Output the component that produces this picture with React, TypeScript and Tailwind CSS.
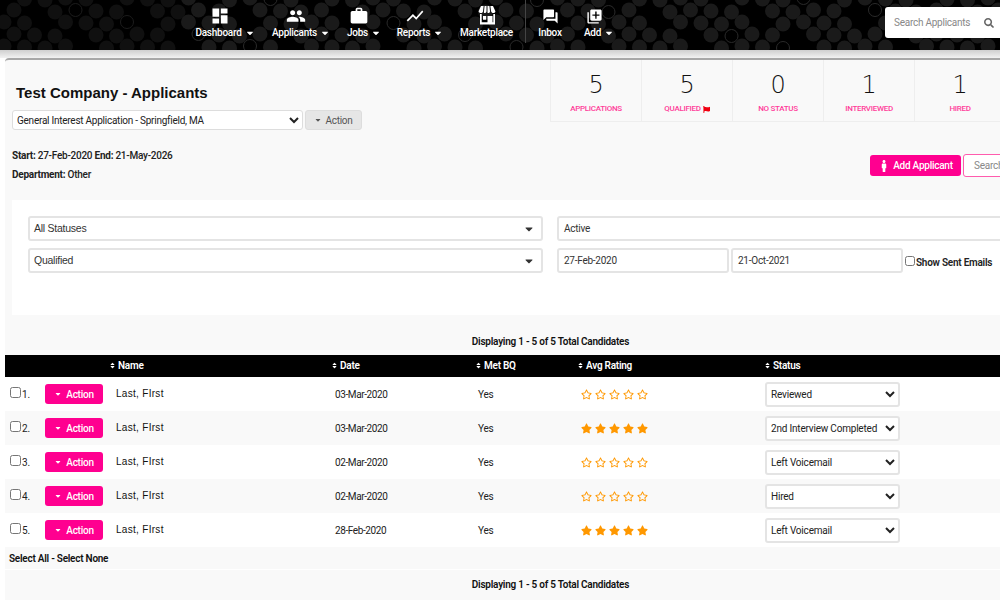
import { FaCaretDown, FaFlag, FaMale, FaRegStar, FaSearch, FaSort, FaStar } from 'react-icons/fa';
import { MdDashboard, MdLibraryAdd, MdPeople, MdQuestionAnswer, MdShowChart, MdWork } from 'react-icons/md';

function StoreIcon({ className }: { className?: string }) {
  return (
    <svg viewBox="0 0 20 20" fill="currentColor" className={className}>
      <path d="M4 0h2.6L6 5.2c0 1-.8 1.8-2 1.8S1.6 6.200 1.600 5.200z" />
      <path d="M7.600 0H9.500v5.200c0 1-.8 1.800-1.800 1.800S6.900 6.200 7 5.200z" />
      <path d="M10.500 0h1.900l.6 5.200c.1 1-.7 1.800-1.700 1.800s-.8-.8-.8-1.800z" />
      <path d="M13.400 0H16l2.400 5.200c0 1-.9 1.800-2.100 1.800s-1.900-.8-2.200-1.800z" />
      <path d="M3 8h1.700v8.300h5.800V10h5V16.300h.8V8H18v10.500H3zM6 10h3.200v3.800H6z" />
    </svg>
  );
}

const NAV = [
  { label: 'Dashboard', icon: MdDashboard, caret: true, w: 'w-[58px]' },
  { label: 'Applicants', icon: MdPeople, caret: true, w: 'w-[56px]' },
  { label: 'Jobs', icon: MdWork, caret: true, w: 'w-[32px]' },
  { label: 'Reports', icon: MdShowChart, caret: true, w: 'w-[42px]' },
  { label: 'Marketplace', icon: StoreIcon, caret: false, w: 'w-[53px]' },
];

const STATS = [
  { value: '5', label: 'APPLICATIONS' },
  { value: '5', label: 'QUALIFIED', flag: true },
  { value: '0', label: 'NO STATUS' },
  { value: '1', label: 'INTERVIEWED' },
  { value: '1', label: 'HIRED' },
];

const ROWS = [
  { n: 1, date: '03-Mar-2020', full: false, status: 'Reviewed' },
  { n: 2, date: '03-Mar-2020', full: true, status: '2nd Interview Completed' },
  { n: 3, date: '02-Mar-2020', full: false, status: 'Left Voicemail' },
  { n: 4, date: '02-Mar-2020', full: false, status: 'Hired' },
  { n: 5, date: '28-Feb-2020', full: true, status: 'Left Voicemail' },
];

const STATUS_OPTIONS = ['Reviewed', '2nd Interview Completed', 'Left Voicemail', 'Hired'];

const COLS = 'grid grid-cols-[40px_71px_219px_143px_103px_185px_1fr] items-center';

function Dots() {
  const items = [];
  for (let y = 0; y < 6; y++) {
    for (let x = 0; x < 52; x++) {
      const cx = x * 20.5 + (y % 2 ? 10 : 0) + 4;
      const cy = y * 12 - 2 + ((x * 7) % 3);
      const ring = (x * 5 + y * 11) % 13 === 0;
      const skip = (x * 3 + y * 7) % 5 === 0;
      if (skip) continue;
      const faint = x < 9;
      items.push(
        ring ? (
          <circle key={`${x}-${y}`} cx={cx} cy={cy} r={6.5} fill="none" stroke={faint ? '#1c1c1c' : '#2a2a2a'} strokeWidth={1} />
        ) : (
          <circle key={`${x}-${y}`} cx={cx} cy={cy} r={7.5} fill={faint ? '#101010' : '#1a1a1a'} />
        ),
      );
    }
  }
  return (
    <svg className="absolute inset-0" width="1000" height="50">
      {items}
    </svg>
  );
}

function Filter({ text, caret, className }: { text: string; caret?: boolean; className: string }) {
  return (
    <div className={`h-[25px] bg-white border-2 border-[#e4e4e4] rounded-[3px] flex items-center justify-between pr-[6px] text-[#333] shrink-0 ${caret ? 'pl-[4px]' : 'pl-[5px]'} ${className}`}>
      <span>{text}</span>
      {caret && <FaCaretDown className="text-[#333] text-[12px]" />}
    </div>
  );
}

function Sort({ label }: { label: string }) {
  return (
    <span className="flex items-center gap-[2px]">
      <FaSort className="text-[7px]" />
      {label}
    </span>
  );
}

export default function App() {
  return (
    <div className="w-[1000px] h-[600px] overflow-hidden bg-white text-[10px] tracking-[-0.25px] text-[#222] font-['Roboto',sans-serif]">
      <header className="relative h-[50px] bg-black overflow-hidden">
        <Dots />
        <div className="relative flex h-full">
          <nav className="flex items-start pl-[196px] gap-[19px] pt-[6px] text-white font-medium">
            {NAV.map((item) => (
              <div key={item.label} className={`flex flex-col items-center ${item.w}`}>
                <item.icon className={`w-[20px] h-[20px] mb-px ${item.caret ? 'mr-[10px]' : ''}`} />
                <span className="flex items-center gap-[3px] whitespace-nowrap leading-[12px]">
                  {item.label}
                  {item.caret && <FaCaretDown className="text-[10px]" />}
                </span>
              </div>
            ))}
            <div className="w-px h-[43px] bg-[#444] -mt-[6px] mx-[-7px]" />
            <div className="flex flex-col items-center w-[24px]">
              <MdQuestionAnswer className="text-[17px] h-[21px]" />
              <span className="leading-[12px]">Inbox</span>
            </div>
            <div className="flex flex-col items-center w-[28px] ml-[4px]">
              <MdLibraryAdd className="text-[17px] h-[21px] mr-[10px]" />
              <span className="flex items-center gap-[3px] leading-[12px]">
                Add
                <FaCaretDown className="text-[10px]" />
              </span>
            </div>
          </nav>
          <div className="absolute left-[885px] top-[7px] w-[115px] h-[31px] bg-white rounded-l-[3px] flex items-center pl-[9px] gap-[14px] text-[#888]">
            <span className="whitespace-nowrap">Search Applicants</span>
            <FaSearch className="text-[10px] text-[#666]" />
          </div>
        </div>
      </header>

      <div className="h-[8px] bg-gradient-to-b from-[#cfcfcf] to-[#f2f2f2]" />
      <div className="ml-[5px] bg-[#f9f9f9] border-t-2 border-[#a8a8a8] rounded-tl-[4px] h-[542px]">
        <section className="flex h-[140px]">
          <div className="w-[545px] pl-[7px] shrink-0">
            <h1 className="font-['Liberation_Sans',sans-serif] font-bold text-[15px] tracking-normal leading-[18px] text-[#111] mt-[24px] ml-[4px]">
              Test Company - Applicants
            </h1>
            <div className="flex items-center gap-[2px] mt-[8px]">
              <select
                defaultValue="General Interest Application - Springfield, MA"
                className="w-[291px] h-[20px] bg-white border border-[#ddd] rounded-[3px] px-0 text-[10px] tracking-[-0.25px] text-[#222]"
              >
                <option>General Interest Application - Springfield, MA</option>
              </select>
              <div className="w-[57px] h-[20px] bg-[#e6e6e6] rounded-[3px] border border-[#ddd] flex items-center justify-center gap-[3px] text-[#555]">
                <FaCaretDown className="text-[8px]" />
                Action
              </div>
            </div>
            <p className="mt-[19px] leading-[14px] font-medium text-[#222]">
              <b>Start:</b> 27-Feb-2020 <b>End:</b> 21-May-2026
            </p>
            <p className="mt-[5px] leading-[14px] font-medium text-[#222]">
              <b>Department:</b> Other
            </p>
          </div>
          <div className="flex flex-col shrink-0">
            <div className="flex h-[62px] border-b border-[#eee] border-l">
              {STATS.map((s) => (
                <div key={s.label} className="w-[91px] shrink-0 border-r border-[#eee] flex flex-col items-center">
                  <span className="font-['DejaVu_Sans',sans-serif] font-extralight text-[24px] leading-[30px] mt-[10px] text-[#111]">{s.value}</span>
                  <span className="flex items-center gap-[2px] text-[8px] tracking-[-0.3px] leading-[10px] mt-[4px] font-medium text-[#ff3d9a]">
                    {s.label}
                    {s.flag && <FaFlag className="text-[#f00010] text-[7px]" />}
                  </span>
                </div>
              ))}
            </div>
            <div className="flex gap-[2px] ml-[320px] mt-[33px]">
              <div className="w-[91px] h-[21px] shrink-0 bg-[#ff0090] rounded-[3px] text-white font-medium flex items-center justify-center gap-[3px]">
                <FaMale className="text-[12px]" />
                Add Applicant
              </div>
              <div className="w-[80px] h-[23px] shrink-0 -mt-px bg-white border border-[#ff5cae] rounded-[3px] text-[#888] flex items-center pl-[10px]">
                Search
              </div>
            </div>
          </div>
        </section>

        <section className="ml-[7px] h-[115px] bg-white pt-[16px] pl-[16px] flex flex-col gap-[7px]">
          <div className="flex gap-[14px]">
            <Filter text="All Statuses" caret className="w-[515px] font-['Liberation_Sans',sans-serif] text-[10.5px]" />
            <Filter text="Active" className="w-[460px]" />
          </div>
          <div className="flex">
            <Filter text="Qualified" caret className="w-[515px] font-['Liberation_Sans',sans-serif] text-[10.5px]" />
            <Filter text="27-Feb-2020" className="w-[172px] ml-[14px]" />
            <Filter text="21-Oct-2021" className="w-[172px] ml-[2px]" />
            <label className="flex items-center ml-[2px] font-semibold whitespace-nowrap pt-[3px]">
              <input type="checkbox" className="w-[10px] h-[10px] mr-[1px] -mt-[2px]" />
              Show Sent Emails
            </label>
          </div>
        </section>

        <p className="text-center font-semibold h-[40px] pt-[20px] leading-[14px] pl-[96px] text-[#111]">Displaying 1 - 5 of 5 Total Candidates</p>

        <div className={`${COLS} h-[22px] bg-black text-white font-semibold pb-[2px]`}>
          <span />
          <span />
          <span className="-ml-[7px]">
            <Sort label="Name" />
          </span>
          <span className="-ml-[4px]">
            <Sort label="Date" />
          </span>
          <span className="-ml-[3px]">
            <Sort label="Met BQ" />
          </span>
          <span className="-ml-[4px]">
            <Sort label="Avg Rating" />
          </span>
          <span className="-ml-[2px]">
            <Sort label="Status" />
          </span>
        </div>

        {ROWS.map((r) => (
          <div key={r.n} className={`${COLS} h-[34px] ${r.n % 2 ? 'bg-white' : 'bg-[#f9f9f9]'}`}>
            <label className="flex items-center pl-[5px] gap-[1px]">
              <input type="checkbox" className="w-[11px] h-[11px] -mt-[3px]" />
              {r.n}.
            </label>
            <div className="w-[58px] h-[20px] bg-[#ff0090] rounded-[3px] text-white font-medium flex items-center justify-center gap-[4px]">
              <FaCaretDown className="text-[8px]" />
              Action
            </div>
            <span className="font-['Liberation_Sans',sans-serif] text-[#111] tracking-[0.3px] -mt-[1px]">Last, FIrst</span>
            <span className="tracking-[-0.4px]">{r.date}</span>
            <span>Yes</span>
            <span className="flex gap-[3px] text-[#ff9800] text-[11px]">
              {[0, 1, 2, 3, 4].map((i) => (r.full ? <FaStar key={i} /> : <FaRegStar key={i} />))}
            </span>
            <select
              defaultValue={r.status}
              className="w-[135px] h-[25px] -ml-px bg-white border-2 border-[#e4e4e4] rounded-[3px] px-0 text-[10px] tracking-[-0.2px] text-[#222]"
            >
              {STATUS_OPTIONS.map((o) => (
                <option key={o}>{o}</option>
              ))}
            </select>
          </div>
        ))}

        <p className="h-[23px] pl-[4px] flex items-center font-semibold text-[#111] border-b border-white">Select All - Select None</p>
        <p className="text-center font-semibold pt-[8px] pl-[96px] leading-[14px] text-[#111]">Displaying 1 - 5 of 5 Total Candidates</p>
      </div>
    </div>
  );
}
